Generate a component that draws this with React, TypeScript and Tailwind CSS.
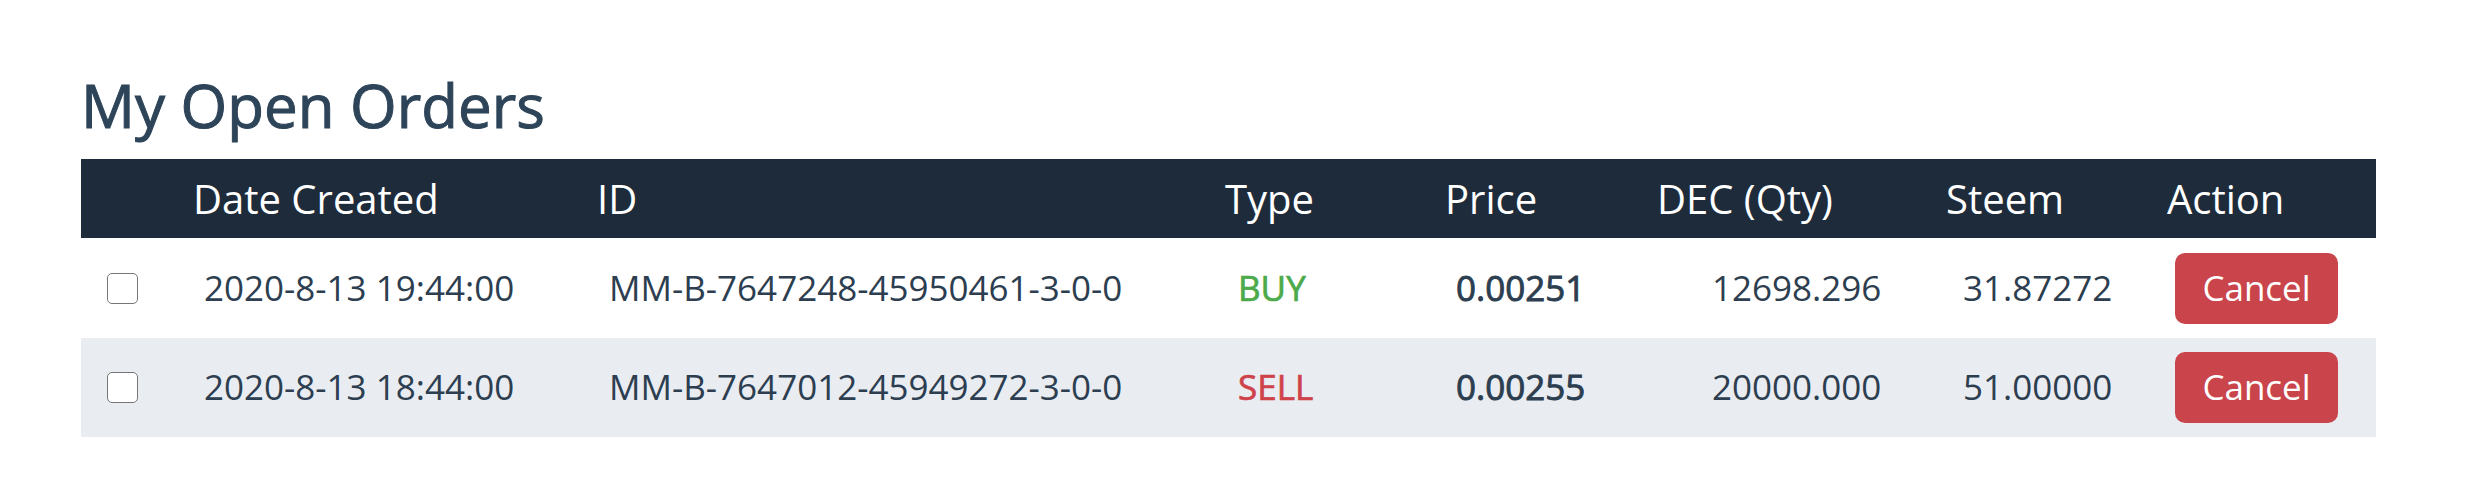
const orders = [
  {
    date: "2020-8-13 19:44:00",
    id: "MM-B-7647248-45950461-3-0-0",
    type: "BUY",
    price: "0.00251",
    qty: "12698.296",
    steem: "31.87272",
  },
  {
    date: "2020-8-13 18:44:00",
    id: "MM-B-7647012-45949272-3-0-0",
    type: "SELL",
    price: "0.00255",
    qty: "20000.000",
    steem: "51.00000",
  },
];

export default function App() {
  return (
    <div className="min-h-[489px] bg-white pt-[69px] pl-[81px] font-['Open_Sans',sans-serif] text-[#2c3e50]">
      <h2 className="mb-[18px] text-[60px] leading-[72px] text-[#2e4459] [-webkit-text-stroke:1px_#2e4459]">
        My Open Orders
      </h2>

      <table className="w-[2295px] table-fixed border-collapse">
        <colgroup>
          <col className="w-[112px]" />
          <col className="w-[404px]" />
          <col className="w-[628px]" />
          <col className="w-[220px]" />
          <col className="w-[212px]" />
          <col className="w-[289px]" />
          <col className="w-[221px]" />
          <col className="w-[209px]" />
        </colgroup>

        <thead className="bg-[#1e2b3b] text-white">
          <tr className="h-[79px] text-left text-[40px]">
            <th></th>
            <th className="font-normal">Date Created</th>
            <th className="font-normal">ID</th>
            <th className="font-normal">Type</th>
            <th className="font-normal">Price</th>
            <th className="font-normal">DEC (Qty)</th>
            <th className="font-normal">Steem</th>
            <th className="font-normal">Action</th>
          </tr>
        </thead>

        <tbody className="text-[35px]">
          {orders.map((order, i) => (
            <tr
              key={order.id}
              className={i % 2 ? "h-[99px] bg-[#e9ecf1]" : "h-[100px] bg-white"}
            >
              <td className="pl-[26px]">
                <input
                  type="checkbox"
                  className="block h-[31px] w-[31px] appearance-none rounded-[5px] border-[1.5px] border-[#767676] bg-white"
                />
              </td>
              <td className="pl-[11px]">{order.date}</td>
              <td className="pl-[12px]">{order.id}</td>
              <td
                className={
                  order.type === "BUY"
                    ? "pl-[13px] text-[#4caa4a] [-webkit-text-stroke:0.7px_#4caa4a]"
                    : "pl-[13px] text-[#d0424a] [-webkit-text-stroke:0.7px_#d0424a]"
                }
              >
                {order.type}
              </td>
              <td className="pl-[11px] [-webkit-text-stroke:0.9px_#2c3e50]">
                {order.price}
              </td>
              <td className="pl-[55px]">{order.qty}</td>
              <td className="pl-[17px]">{order.steem}</td>
              <td className="pl-[8px]">
                <button className="flex h-[71px] w-[163px] items-center justify-center rounded-[10px] bg-[#c9444b] text-white">
                  Cancel
                </button>
              </td>
            </tr>
          ))}
        </tbody>
      </table>
    </div>
  );
}
